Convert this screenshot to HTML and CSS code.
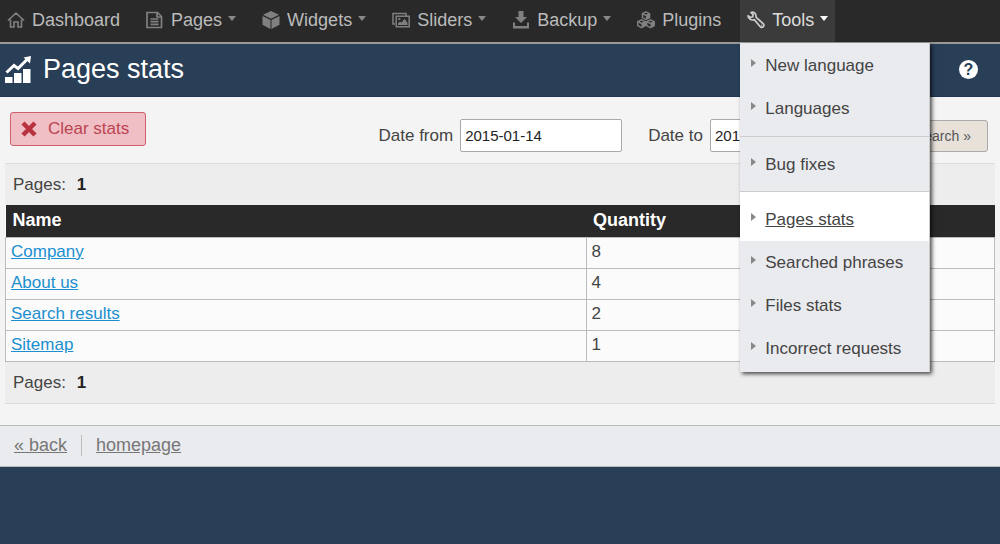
FILE: index.html
```html
<!DOCTYPE html>
<html lang="en">
<head>
    <meta charset="UTF-8">
    <meta name="viewport" content="width=device-width, initial-scale=1.0">
    <title>Pages stats</title>
    <link rel="stylesheet" href="styles.css">
</head>
<body>
    <nav class="nav">
        <div class="nav-item">
            <a href="#" class="nav-link">
                <svg class="icon" viewBox="0 0 18 18" fill="none" stroke="currentColor" stroke-width="1.6"><path d="M1 9.500 9 2l8 7.500M3.500 8.500V16h3.500v-5h4v5h3.500V8.500"/></svg>
                Dashboard
            </a>
        </div>
        <div class="nav-item">
            <a href="#" class="nav-link">
                <svg class="icon" viewBox="0 0 18 18" fill="none" stroke="currentColor" stroke-width="1.7"><path d="M1 1.500h10.500l4 4v11H1zM11 1.500V6h4.500M4.500 8h8M4.500 10.700h8M4.500 13.400h8"/></svg>
                Pages
                <span class="caret"></span>
            </a>
        </div>
        <div class="nav-item">
            <a href="#" class="nav-link">
                <svg class="icon" viewBox="0 0 18 18" fill="currentColor"><path d="M9 0l8 3.800-8 4L1 3.800zM.500 5l8 4v9l-8-4.300zM17.500 5l-8 4v9l8-4.300z"/></svg>
                Widgets
                <span class="caret"></span>
            </a>
        </div>
        <div class="nav-item">
            <a href="#" class="nav-link">
                <svg class="icon" viewBox="0 0 18 18" fill="none" stroke="currentColor" stroke-width="1.500"><path d="M3 13H1V2.500h13V5M4.200 5.200h13v10.600h-13z"/><path fill="currentColor" stroke="none" d="M6 14v-1.500l2-2 1.500 1.300 3-4 3 4.200v2zM6.300 7h2v2h-2z"/></svg>
                Sliders
                <span class="caret"></span>
            </a>
        </div>
        <div class="nav-item">
            <a href="#" class="nav-link">
                <svg class="icon" viewBox="0 0 18 18" fill="currentColor"><path d="M6.500 0h5v6h3.500l-6 6-6-6h3.500zM1 11.500h2V15h12v-3.500h2V17.500H1z"/></svg>
                Backup
                <span class="caret"></span>
            </a>
        </div>
        <div class="nav-item">
            <a href="#" class="nav-link">
                <svg class="icon" viewBox="0 0 18 18" fill="none" stroke="currentColor" stroke-width="1.400"><path d="M9 .800l3.600 1.800v4L9 8.500 5.400 6.600v-4zM5.400 2.600 9 4.400l3.600-1.800M4.500 8.800l3.800 1.900v4l-3.800 2-3.800-2v-4zM.700 10.700l3.800 1.800 3.800-1.800M13.500 8.800l3.800 1.900v4l-3.800 2-3.800-2v-4zM9.700 10.700l3.800 1.800 3.800-1.800"/><path fill="currentColor" stroke="none" d="M9 4.400l3.600-1.800v4L9 8.500zM4.500 12.500l3.800-1.800v4l-3.800 2zM13.500 12.500l3.800-1.800v4l-3.800 2z"/></svg>
                Plugins
            </a>
        </div>
        <div class="nav-item active">
            <a href="#" class="nav-link">
                <svg class="icon" viewBox="0 0 18 18" fill="none" stroke="currentColor" stroke-width="1.700" stroke-linejoin="round"><path d="M4 1.500C6.500.500 9.500 2.300 9 6.200l7.500 6.800c1.400 1.800-1 4.400-3 3L7.300 8.600C4.500 9.800 1.300 8 1 4.800l2.500 1.700 2.300-.700.300-2.200z"/><path d="M14.300 14.300h.800"/></svg>
                Tools
                <span class="caret"></span>
            </a>
            <div class="menu">
                <div class="menu-group">
                    <a href="#" class="menu-link"><span>New language</span></a>
                    <a href="#" class="menu-link"><span>Languages</span></a>
                </div>
                <div class="menu-group">
                    <a href="#" class="menu-link"><span>Bug fixes</span></a>
                </div>
                <div class="menu-group">
                    <a href="#" class="menu-link current"><span>Pages stats</span></a>
                    <a href="#" class="menu-link"><span>Searched phrases</span></a>
                    <a href="#" class="menu-link"><span>Files stats</span></a>
                    <a href="#" class="menu-link"><span>Incorrect requests</span></a>
                </div>
            </div>
        </div>
    </nav>

    <header class="title-bar">
        <svg class="title-icon" viewBox="0 0 26 27" fill="#fff"><path d="M0 21h7.500v6H0zM9 17h7.500v10H9zM18 13h7.500v14H18z"/><path d="M1.500 16.500 9 9.500l4 3L22.500 3" fill="none" stroke="#fff" stroke-width="3"/><path d="M18.500 1.500 26 0l-1 7.500z"/></svg>
        <h1>Pages stats</h1>
        <a href="#" class="help" aria-label="Help">?</a>
    </header>

    <main class="content">
        <form class="filter">
            <button type="button" class="btn-clear">
                <svg class="cross" viewBox="0 0 16 16" stroke="currentColor" stroke-width="4.500"><path d="M2 2l12 12M14 2 2 14"/></svg>
                Clear stats
            </button>
            <div class="dates">
                <label for="from">Date from</label>
                <input type="text" id="from" name="from" value="2015-01-14">
            </div>
            <div class="dates">
                <label for="to">Date to</label>
                <input type="text" id="to" name="to" value="2015-01-14">
            </div>
            <button type="submit" class="btn-search">Search »</button>
        </form>

        <div class="list">
            <div class="pages">Pages: <strong>1</strong></div>
            <table>
                <thead>
                    <tr><th class="name">Name</th><th>Quantity</th></tr>
                </thead>
                <tbody>
                    <tr><td><a href="#">Company</a></td><td>8</td></tr>
                    <tr><td><a href="#">About us</a></td><td>4</td></tr>
                    <tr><td><a href="#">Search results</a></td><td>2</td></tr>
                    <tr><td><a href="#">Sitemap</a></td><td>1</td></tr>
                </tbody>
            </table>
            <div class="pages">Pages: <strong>1</strong></div>
        </div>
    </main>

    <footer class="footer">
        <a href="#">« back</a>
        <a href="#" class="home">homepage</a>
    </footer>
</body>
</html>
```

FILE: styles.css
```css
*{
    box-sizing: border-box;
}

body{
    margin: 0;
    background-color: #293f58;
    color: #444;
    font-family: "Liberation Sans", Arial, sans-serif;
    font-size: 17px;
}

/* top navigation */
.nav{
    display: flex;
    gap: 12px;
    background-color: #292929;
    border-bottom: 2px solid #999;
}

.nav-item{
    position: relative;
}

.nav-link{
    display: flex;
    align-items: center;
    height: 42px;
    padding: 0 7px 2px;
    color: #bbb;
    font-size: 18px;
    text-decoration: none;
    white-space: nowrap;
}

.icon{
    width: 18px;
    height: 18px;
    margin-right: 7px;
    color: #808080;
}

.caret{
    margin: 0 0 4px 6px;
    border: 4px solid transparent;
    border-top: 5px solid #888;
    border-bottom: 0;
}

.active{
    background-color: #3b3b3b;
}

.active .nav-link{
    color: #ddd;
}

.active .icon{
    color: #ccc;
}

.active .caret{
    border-top-color: #fff;
}

.menu{
    position: absolute;
    top: 43px;
    left: 0;
    z-index: 1;
    width: 190px;
    padding: 1px 0 2px;
    background-color: #eaebef;
    border-right: 1px solid #ccc;
    box-shadow: 2px 2px 4px rgba(0, 0, 0, 0.7);
}

.menu-group + .menu-group{
    margin-top: 6px;
    border-top: 1px solid #ccc;
    padding-top: 6px;
}

.menu-group + .menu-group:last-child{
    margin-top: 5px;
    padding-top: 0;
}

.menu-link{
    display: flex;
    align-items: center;
    height: 43px;
    padding-left: 11px;
    color: #444;
    text-decoration: none;
}

.menu-link::before{
    content: "";
    margin: 0 9px 6px 0;
    border: 4px solid transparent;
    border-left: 5px solid #888;
    border-right: 0;
}

.current{
    height: 49px;
    padding-top: 6px;
    background-color: #fff;
    text-decoration: underline;
}

/* page title */
.title-bar{
    display: flex;
    align-items: center;
    height: 53px;
    padding: 0 22px 2px 5px;
    border-bottom: 1px solid #1f3654;
    color: #fff;
}

.title-icon{
    width: 26px;
    height: 27px;
    margin-right: 12px;
}

h1{
    flex: 1;
    margin: 0;
    font-size: 27px;
    font-weight: normal;
}

.help{
    width: 19px;
    border-radius: 50%;
    background-color: #fff;
    color: #293f58;
    font-size: 16px;
    font-weight: bold;
    line-height: 19px;
    text-align: center;
    text-decoration: none;
}

/* content */
.content{
    padding: 15px 5px 21px;
    background-color: #f4f4f4;
}

.filter{
    display: flex;
    align-items: flex-start;
    gap: 26px;
    margin-bottom: 11px;
    padding: 0 7px 0 5px;
}

.btn-clear{
    display: flex;
    align-items: center;
    height: 34px;
    margin-right: auto;
    padding: 0 16px 0 10px;
    border: 1px solid #d0606c;
    border-radius: 3px;
    background-color: #efbfc5;
    color: #bb4451;
    font: inherit;
}

.cross{
    width: 16px;
    height: 16px;
    margin-right: 11px;
    color: #b83240;
}

.dates{
    display: flex;
    align-items: center;
    gap: 7px;
    padding-top: 7px;
}

.dates input{
    width: 162px;
    height: 33px;
    padding: 0 4px;
    border: 1px solid #aaa;
    border-radius: 2px;
    background-color: #fff;
    color: #222;
    font-family: inherit;
    font-size: 15px;
}

.btn-search{
    height: 32px;
    margin-top: 8px;
    padding: 0 16px;
    border: 1px solid #aaa;
    border-radius: 3px;
    background-color: #e7e1da;
    color: #555;
    font-family: inherit;
    font-size: 14px;
}

.list{
    border-top: 1px solid #ddd;
    border-bottom: 1px solid #ddd;
    background-color: #ededed;
}

.pages{
    padding: 0 8px;
    line-height: 41px;
}

.pages strong{
    margin-left: 6px;
    color: #222;
}

table{
    width: 100%;
    border-collapse: collapse;
    background-color: #fbfbfb;
}

th{
    height: 32px;
    padding: 0 7px 1px;
    background-color: #292929;
    color: #fff;
    font-size: 18px;
    text-align: left;
}

.name{
    width: 58.7%;
}

td{
    height: 31px;
    padding: 0 5px 1px;
    border: 1px solid #bbb;
}

td a{
    color: #1b8fcf;
}

/* footer */
.footer{
    display: flex;
    align-items: center;
    height: 42px;
    padding: 0 14px;
    border-top: 1px solid #bbb;
    border-bottom: 1px solid #bbb;
    background-color: #eaebef;
}

.footer a{
    color: #777;
    font-size: 18px;
}

.home{
    margin-left: 14px;
    border-left: 1px solid #bbb;
    padding-left: 14px;
}
```
